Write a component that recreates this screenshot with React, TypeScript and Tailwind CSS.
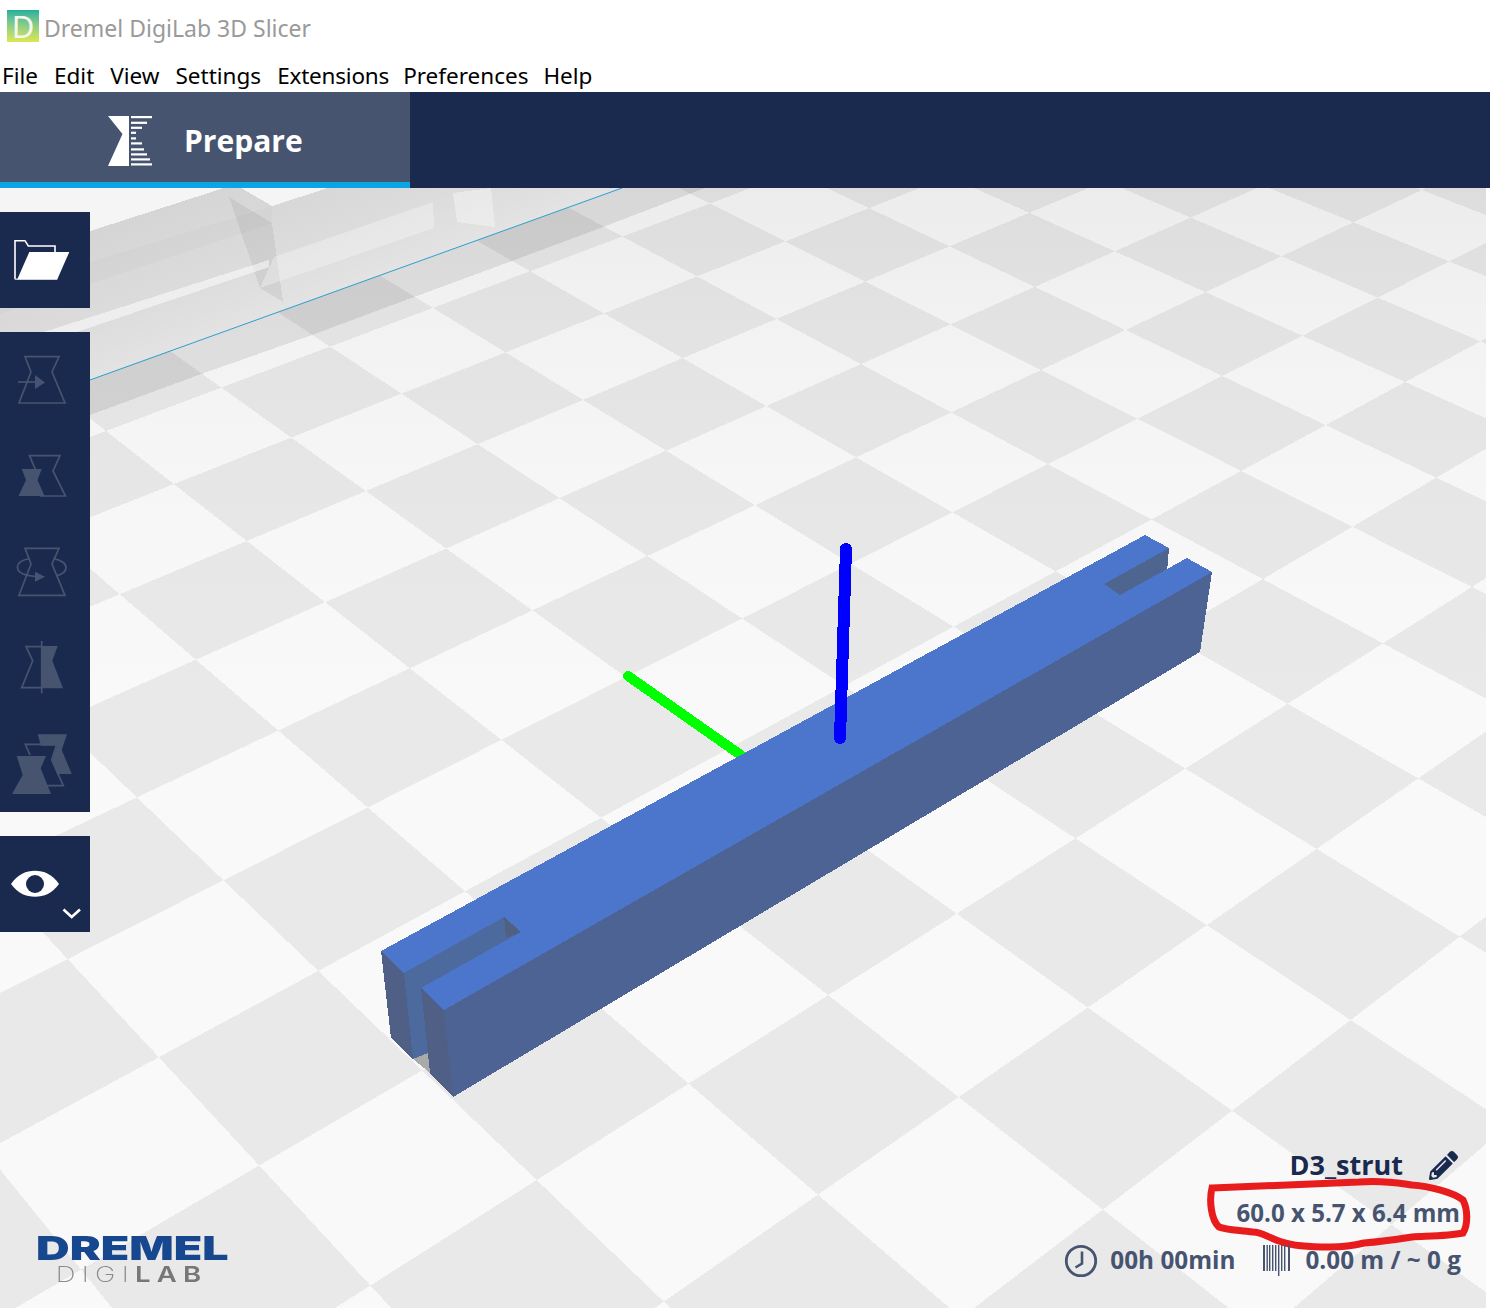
import React from "react";
import { FaPencilAlt } from "react-icons/fa";

type C = [number, number, number, number];
const pts: C[] = [
  [0,0,952,512],[1,0,1048,464],[2,0,1138,419],[3,0,1222,376],[4,0,1302,336],[5,0,1378,297],[6,0,1448,262],
  [-1,-1,755,505],[0,-1,856,457],[1,-1,951,412],[2,-1,1040,370],[3,-1,1126,330],[4,-1,1205,292],[5,-1,1282,256],[6,-1,1353,222],
  [0,-2,766,406],[1,-2,861,364],[2,-2,951,325],[3,-2,1035,287],[4,-2,1116,251],[5,-2,1191,218],
  [1,-3,777,319],[2,-3,865,282],[3,-3,950,247],[4,-3,1029,213],[2,-4,785,241],[3,-4,869,208],
  [0,1,1056,571],[1,1,1151,520],[2,1,1241,471],[3,1,1326,425],[4,1,1405,382],[5,1,1481,341],
  [1,2,1263,579],[2,2,1352,527],[3,2,1437,478],
  [-2,3,1076,838],[-2,4,1206,926],[-2,5,1351,1020],[-1,4,1317,849],[-1,5,1459,936],
  [-3,3,956,914],[-3,4,1088,1007],[-3,5,1232,1111],[-4,3,829,995],[-4,4,959,1097],[-4,5,1103,1210],
  [-5,3,689,1084],[-5,4,818,1195],[-6,1,319,971],[-6,2,421,1071],[-6,3,537,1180],[-6,4,664,1301],
  [-7,0,68,959],[-7,1,159,1057],[-7,2,259,1166],[-7,3,371,1285],
  [-2,-1,648,556],[-2,0,742,618],[-3,0,623,677],
];

function solveH(): number[] {
  const n = 8;
  const A: number[][] = Array.from({ length: n }, () => new Array(n + 1).fill(0));
  const add = (r: number[], t: number) => {
    for (let a = 0; a < n; a++) {
      for (let b = 0; b < n; b++) A[a][b] += r[a] * r[b];
      A[a][n] += r[a] * t;
    }
  };
  for (const [i, j, x, y] of pts) {
    add([i, j, 1, 0, 0, 0, -x * i, -x * j], x);
    add([0, 0, 0, i, j, 1, -y * i, -y * j], y);
  }
  for (let c = 0; c < n; c++) {
    let p = c;
    for (let r = c + 1; r < n; r++) if (Math.abs(A[r][c]) > Math.abs(A[p][c])) p = r;
    [A[c], A[p]] = [A[p], A[c]];
    for (let r = 0; r < n; r++) {
      if (r === c) continue;
      const f = A[r][c] / A[c][c];
      for (let k = c; k <= n; k++) A[r][k] -= f * A[c][k];
    }
  }
  return A.map((row, k) => row[n] / row[k]);
}

const H = solveH();
function project(i: number, j: number): [number, number] | null {
  const w = H[6] * i + H[7] * j + 1;
  if (w < 0.08) return null;
  return [(H[0] * i + H[1] * j + H[2]) / w, (H[3] * i + H[4] * j + H[5]) / w];
}

const tiles: string[] = [];
for (let i = -18; i <= 22; i++) {
  for (let j = -14; j <= 14; j++) {
    if (((i + j) % 2 + 2) % 2 !== 0) continue;
    const q = [project(i, j), project(i + 1, j), project(i + 1, j + 1), project(i, j + 1)];
    if (q.some((p) => !p)) continue;
    tiles.push(q.map((p) => `${p![0].toFixed(1)},${p![1].toFixed(1)}`).join(" "));
  }
}

function Scene() {
  return (
    <svg className="absolute inset-0 h-full w-full" viewBox="0 188 1490 1120" shapeRendering="crispEdges">
      <defs>
        <linearGradient id="fog" gradientUnits="userSpaceOnUse" x1="0" y1="188" x2="0" y2="720">
          <stop offset="0" stopColor="#000" stopOpacity="0.052" />
          <stop offset="0.25" stopColor="#000" stopOpacity="0.028" />
          <stop offset="0.6" stopColor="#000" stopOpacity="0.01" />
          <stop offset="1" stopColor="#000" stopOpacity="0" />
        </linearGradient>
        <linearGradient id="wall" gradientUnits="userSpaceOnUse" x1="224" y1="188" x2="270" y2="315">
          <stop offset="0" stopColor="#d5d5d5" />
          <stop offset="0.6" stopColor="#dcdcdc" />
          <stop offset="1" stopColor="#e3e3e3" />
        </linearGradient>
      </defs>
      <rect x="0" y="188" width="1490" height="1120" fill="#f9f9f9" />
      {tiles.map((t, k) => (
        <polygon key={k} points={t} fill="#e9e9e9" />
      ))}
      <rect x="0" y="188" width="1490" height="1120" fill="url(#fog)" />

      {/* build volume */}
      <polygon points="0,260 224,188 0,188" fill="#f5f5f5" />
      <polygon points="224,188 241,188 272,206 328,188" fill="#f5f5f5" />
      <polygon points="0,260 224,188 241,188 272,206 328,188 622,188 0,412" fill="url(#wall)" />
      <polygon points="0,412 622,188 705,188 603,227 512,261 414,297 312,335 204,373 90,415 0,447" fill="#000" fillOpacity="0.085" />
      <polygon points="229,197 272,223 283,302 260,288" fill="#000" fillOpacity="0.06" />
      <polygon points="260,288 434,228 433,202 274,257" fill="#fff" fillOpacity="0.3" />
      <polygon points="453,193 491,188 495,227 457,222" fill="#fff" fillOpacity="0.35" />
      <polygon points="0,346 269,260 269,267 0,358" fill="#fff" fillOpacity="0.5" />
      <polygon points="0,290 272,206 272,223 0,314" fill="#000" fillOpacity="0.015" />
      <line x1="90" y1="380" x2="622" y2="188" stroke="#2a9fd0" strokeWidth="1" shapeRendering="auto" />

      {/* axes */}
      <line x1="628" y1="676" x2="745" y2="758" stroke="#00ff00" strokeWidth="10" strokeLinecap="round" />

      {/* model */}
      <polygon points="444,1010 1212,572 1200,652 453,1097" fill="#4c6394" />
      <polygon points="404,973 504,917 530,932 440,1000 430,1060 413,1059" fill="#4d6a9f" />
      <polygon points="504,917 521,932 506,938" fill="#4f6080" />
      <polygon points="381,951 404,973 413,1059 391,1038" fill="#4f5f85" />
      <polygon points="413,1059 428,1053 430,1073" fill="#aaaaaa" />
      <polygon points="421,988 444,1010 453,1097 430,1073" fill="#4f5f85" />
      <polygon points="1169,548 1167,572 1125,600 1104,584" fill="#4e6590" />
      <polygon
        points="381,951 1145,535 1169,548 1104,584 1120,595 1187,558 1212,572 444,1010 421,988 521,932 504,917 404,973"
        fill="#4c75cc"
      />
      <line x1="846" y1="549" x2="840" y2="738" stroke="#0000ff" strokeWidth="12" strokeLinecap="round" />

      {/* marker scribble */}
      <path
        transform="translate(-2 0)"
        d="M1214 1188 C1260 1186 1320 1184 1361 1182 C1385 1180 1400 1183 1414 1185 C1430 1186 1455 1192 1465 1200 C1470 1210 1470 1225 1465 1233 C1450 1236 1430 1236 1414 1237 C1395 1240 1380 1242 1366 1243 C1350 1247 1340 1247 1332 1247 C1310 1247 1295 1246 1284 1242 C1270 1238 1265 1232 1255 1232 C1240 1230 1228 1230 1221 1227 C1213 1220 1211 1200 1214 1188 Z"
        fill="none"
        stroke="#e81c1c"
        strokeWidth="7"
        shapeRendering="auto"
      />
      <rect x="1486" y="188" width="4" height="1120" fill="#ffffff" />
    </svg>
  );
}

const dim = "#475470";

function IconSvg({ children }: { children: React.ReactNode }) {
  return (
    <svg width="90" height="96" viewBox="0 0 90 96" className="block">
      {children}
    </svg>
  );
}

function Folder() {
  return (
    <IconSvg>
      <path d="M15 67.3V28.7H25L28.3 34H55V40" fill="none" stroke="#ffffff" strokeWidth="1.6" />
      <path d="M15 67.3H57.3" fill="none" stroke="#b9bfcb" strokeWidth="1.6" />
      <polygon points="29.3,40 69.3,40 57.3,67.3 17.3,67.3" fill="#ffffff" />
    </IconSvg>
  );
}

function Move() {
  return (
    <IconSvg>
      <polygon points="25,24.7 59,24.7 52,40 65,71 19,71 31,40" fill="none" stroke={dim} strokeWidth="1.7" />
      <line x1="18" y1="50" x2="36" y2="50" stroke={dim} strokeWidth="1.7" />
      <polygon points="35,43 45,50.5 35,57" fill={dim} />
    </IconSvg>
  );
}

function Scale() {
  return (
    <IconSvg>
      <path d="M36 43L29.5 27.7H60L53 43L65.5 68H40" fill="none" stroke={dim} strokeWidth="1.7" />
      <polygon points="21.7,41 41.7,41 37.5,52 44.5,68 18.5,68 26,52" fill={dim} />
    </IconSvg>
  );
}

function Rotate() {
  return (
    <IconSvg>
      <polygon points="25,24.3 59,24.3 52,40 65,71.3 19,71.3 31,40" fill="none" stroke={dim} strokeWidth="1.7" />
      <path d="M30 34.5C21 36 17.5 40 17.5 43.5C17.5 48 24 51.5 36 52.5" fill="none" stroke={dim} strokeWidth="1.7" />
      <path d="M53 34.5C62 36 66 40 66 43.5C66 47.5 62 50.5 56 52" fill="none" stroke={dim} strokeWidth="1.7" />
      <polygon points="35,47.7 45,52.7 35,57.7" fill={dim} />
    </IconSvg>
  );
}

function Mirror() {
  return (
    <IconSvg>
      <path d="M41.7 26.7H26L32.7 40.7L21.7 67.7H41.7" fill="none" stroke={dim} strokeWidth="1.7" />
      <polygon points="41.7,26 57.7,26 52.3,40.7 63,68.3 41.7,68.3" fill={dim} />
      <line x1="41.7" y1="21" x2="41.7" y2="73.3" stroke={dim} strokeWidth="1.7" />
    </IconSvg>
  );
}

function Multi() {
  return (
    <IconSvg>
      <polygon points="37.7,18.3 67,18.3 61.7,34 71.7,58 57,58 52,44 57,29.7 41,29.7" fill={dim} />
      <path d="M30 39L25.3 28.3H56.7L51.7 44L63.3 69.7H46" fill="none" stroke={dim} strokeWidth="1.7" />
      <polygon points="16.7,40 46,40 40.7,52.3 51,78 12,78 22.7,59" fill={dim} />
    </IconSvg>
  );
}

function Eye() {
  return (
    <IconSvg>
      <path d="M11 48C18 38 26 34.7 35 34.7C44 34.7 52 38 59 48C52 57.5 44 60.7 35 60.7C26 60.7 18 57.5 11 48Z" fill="#fff" />
      <circle cx="35" cy="48" r="9" fill="#1a2a4f" />
      <path d="M63.5 73.5L71.7 81L80 73.5" fill="none" stroke="#fff" strokeWidth="2.6" />
    </IconSvg>
  );
}

function PrepareIcon() {
  const bars: [number, number][] = [
    [116, 152], [121.7, 147], [126.7, 142], [131.7, 136], [137.3, 136],
    [142.3, 142], [148.3, 144], [153.3, 147], [158.3, 150], [163.3, 152],
  ];
  return (
    <svg width="46" height="52" viewBox="108 114 46 52" className="block">
      <polygon points="108,115 129,115 129,165 108,165 122.5,133" fill="#fff" />
      {bars.map(([y, x], k) => (
        <rect key={k} x="131" y={y - 1} width={x - 131} height="2.2" fill="#fff" />
      ))}
    </svg>
  );
}

function Clock() {
  return (
    <svg width="34" height="34" viewBox="0 0 34 34" className="block">
      <circle cx="17" cy="17" r="14.7" fill="none" stroke={dim} strokeWidth="2.8" />
      <path d="M18 7.5V19.5L11.5 23.5" fill="none" stroke={dim} strokeWidth="2.6" />
    </svg>
  );
}

function Barcode() {
  const xs: [number, number, number][] = [
    [1, 2, 26], [4.5, 1.4, 26], [7, 1.4, 26], [10, 1.4, 26], [13, 1.4, 26],
    [16, 1.4, 31], [19, 1.4, 26], [22, 1.4, 26], [26, 2, 26],
  ];
  return (
    <svg width="28" height="31" viewBox="0 0 28 31" className="block">
      {xs.map(([x, w, h], k) => (
        <rect key={k} x={x} y="0" width={w} height={h} fill={dim} />
      ))}
    </svg>
  );
}

function Btn({ children }: { children: React.ReactNode }) {
  return <div className="h-24 w-[90px]">{children}</div>;
}

export default function App() {
  return (
    <div className="relative flex h-[1308px] w-[1490px] flex-col overflow-hidden bg-white font-['Noto_Sans',sans-serif]">
      <div className="flex h-[46px] items-end pb-[4px] pl-[7px]">
        <div className="flex h-8 w-8 items-center justify-center bg-gradient-to-b from-[#1bb09f] to-[#dbe84d] text-[31px] leading-none text-[#f3f8f0]">
          D
        </div>
        <span className="-mb-[2px] ml-[5px] text-[23px] leading-8 text-[#9a9a9a]">Dremel DigiLab 3D Slicer</span>
      </div>
      <div className="flex h-[46px] items-end gap-4 pb-[1px] pl-[2px] text-[22.5px] leading-[30px] text-black">
        <span>File</span>
        <span>Edit</span>
        <span>View</span>
        <span>Settings</span>
        <span className="mr-[-2px] tracking-[-0.2px]">Extensions</span>
        <span className="mr-[-1px]">Preferences</span>
        <span>Help</span>
      </div>
      <div className="flex h-24 bg-[#1a2a4f]">
        <div className="flex h-24 w-[410px] items-center border-b-[6px] border-[#0ba5e4] bg-[#475470] pl-[108px] pt-[7px]">
          <PrepareIcon />
          <span className="ml-[30px] font-['Open_Sans',sans-serif] text-[30px] font-bold leading-none text-white">
            Prepare
          </span>
        </div>
      </div>
      <div className="relative flex-1">
        <Scene />
        <div className="absolute left-0 top-6 flex flex-col gap-6">
          <div className="bg-[#1a2a4f]">
            <Btn><Folder /></Btn>
          </div>
          <div className="bg-[#1a2a4f]">
            <Btn><Move /></Btn>
            <Btn><Scale /></Btn>
            <Btn><Rotate /></Btn>
            <Btn><Mirror /></Btn>
            <Btn><Multi /></Btn>
          </div>
          <div className="bg-[#1a2a4f]">
            <Btn><Eye /></Btn>
          </div>
        </div>
        <div className="absolute bottom-[22px] left-[36px] flex w-[192px] flex-col items-center blur-[0.4px]">
          <div className="origin-center scale-x-[1.41] font-['Inter',sans-serif] text-[33px] font-black leading-[28px] text-[#17478f]">
            DREMEL
          </div>
          <div className="origin-center scale-x-[1.25] font-['Inter',sans-serif] text-[22px] leading-[24px] tracking-[5px] text-[#8a8a8a]">
            <span className="font-extralight">DIGI</span>
            <span className="font-semibold text-[#777777]">LAB</span>
          </div>
        </div>
        <div className="absolute bottom-[24px] right-[29px] flex flex-col items-end font-['Open_Sans',sans-serif] font-bold">
          <div className="flex h-[47px] items-center pb-[2px] pr-[3px] text-[27px] text-[#1a2a4f]">
            <span>D3_strut</span>
            <FaPencilAlt className="ml-[26px] text-[29px]" />
          </div>
          <div className="flex h-[47px] items-center pr-[1px] text-[24.1px] text-[#475470]">60.0 x 5.7 x 6.4 mm</div>
          <div className="flex h-[47px] items-center text-[24.3px] text-[#475470]">
            <Clock />
            <span className="ml-[12px]">00h 00min</span>
            <span className="ml-[27px]"><Barcode /></span>
            <span className="ml-[15px]">0.00 m / ~ 0 g</span>
          </div>
        </div>
      </div>
    </div>
  );
}
